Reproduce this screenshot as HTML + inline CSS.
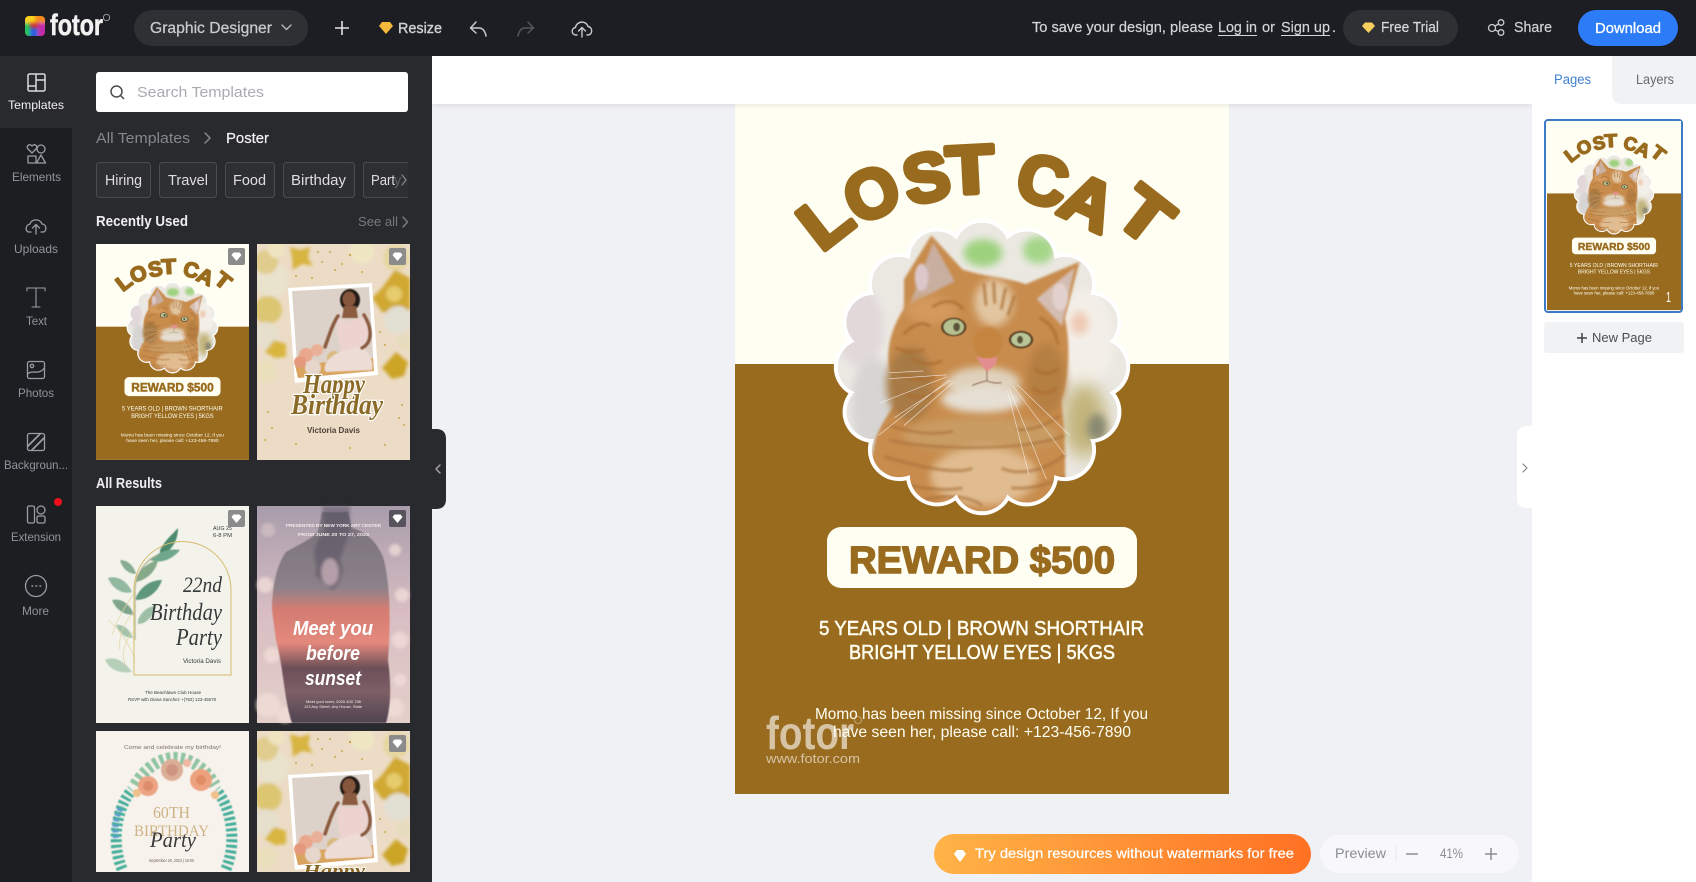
<!DOCTYPE html>
<html lang="en"><head><meta charset="utf-8"><title>Fotor Graphic Designer</title>
<style>
html,body{margin:0;padding:0;background:#f0f1f4;width:1696px;height:882px;overflow:hidden}
svg{display:block}
text{font-family:"Liberation Sans",sans-serif}
.sf{font-family:"Liberation Serif",serif;font-style:italic}
.ic{fill:none;stroke-linecap:round;stroke-linejoin:round}
</style></head><body>
<svg xmlns="http://www.w3.org/2000/svg" width="1696" height="882" viewBox="0 0 1696 882">
<defs>
<filter id="b1" x="-30%" y="-30%" width="160%" height="160%"><feGaussianBlur stdDeviation="1.500"/></filter>
<filter id="b3" x="-40%" y="-40%" width="180%" height="180%"><feGaussianBlur stdDeviation="4"/></filter>
<filter id="b8" x="-60%" y="-60%" width="220%" height="220%"><feGaussianBlur stdDeviation="9"/></filter>
<filter id="s" x="-20%" y="-20%" width="140%" height="140%"><feGaussianBlur stdDeviation=".6"/></filter>
<filter id="sh" x="-5%" y="-30%" width="110%" height="170%"><feGaussianBlur stdDeviation="3"/></filter>
<linearGradient id="org" x1="0" x2="1"><stop offset="0" stop-color="#ffb347"/><stop offset="1" stop-color="#ff7124"/></linearGradient>
<linearGradient id="sun" x1="0" y1="0" x2="0" y2="1"><stop offset="0" stop-color="#77707a"/><stop offset=".36" stop-color="#8d828a"/><stop offset=".46" stop-color="#d47c72"/><stop offset=".62" stop-color="#e4897c"/><stop offset=".74" stop-color="#6c5058"/><stop offset=".85" stop-color="#7d5f66"/><stop offset="1" stop-color="#4f4450"/></linearGradient>
<linearGradient id="bok" x1="0" y1="0" x2="0" y2="1"><stop offset="0" stop-color="#a89cab"/><stop offset=".5" stop-color="#d8bec3"/><stop offset="1" stop-color="#e4cfca"/></linearGradient>
<clipPath id="blobClip">
<circle r="110"/><circle cx="120" r="28"/><circle cx="111" cy="46" r="28"/><circle cx="85" cy="85" r="28"/><circle cx="46" cy="111" r="28"/><circle cy="120" r="28"/><circle cx="-46" cy="111" r="28"/><circle cx="-85" cy="85" r="28"/><circle cx="-111" cy="46" r="28"/><circle cx="-120" r="28"/><circle cx="-111" cy="-46" r="28"/><circle cx="-85" cy="-85" r="28"/><circle cx="-46" cy="-111" r="28"/><circle cy="-120" r="28"/><circle cx="46" cy="-111" r="28"/><circle cx="85" cy="-85" r="28"/><circle cx="111" cy="-46" r="28"/>
</clipPath>
<clipPath id="t2"><rect x="257" y="244" width="153" height="216"/></clipPath>
<g id="blobOut" fill="#fff">
<circle r="112"/><circle cx="120" r="32"/><circle cx="111" cy="46" r="32"/><circle cx="85" cy="85" r="32"/><circle cx="46" cy="111" r="32"/><circle cy="120" r="32"/><circle cx="-46" cy="111" r="32"/><circle cx="-85" cy="85" r="32"/><circle cx="-111" cy="46" r="32"/><circle cx="-120" r="32"/><circle cx="-111" cy="-46" r="32"/><circle cx="-85" cy="-85" r="32"/><circle cx="-46" cy="-111" r="32"/><circle cy="-120" r="32"/><circle cx="46" cy="-111" r="32"/><circle cx="85" cy="-85" r="32"/><circle cx="111" cy="-46" r="32"/>
</g>
<g id="cat">
<use href="#blobOut"/>
<g clip-path="url(#blobClip)">
<rect x="-150" y="-150" width="300" height="300" fill="#ebe8e2"/>
<ellipse cx="1" cy="-117" rx="20" ry="14" fill="#9ed27e" filter="url(#b3)"/>
<ellipse cx="58" cy="-120" rx="16" ry="14" fill="#a4d688" filter="url(#b3)"/>
<ellipse cx="-125" cy="-40" rx="24" ry="40" fill="#e2d8da" filter="url(#b3)"/>
<ellipse cx="-112" cy="40" rx="22" ry="50" fill="#d7d5d4" filter="url(#b3)"/>
<ellipse cx="105" cy="-30" rx="30" ry="50" fill="#f3efe8" filter="url(#b3)"/>
<ellipse cx="100" cy="-45" rx="9" ry="12" fill="#efc9b2" filter="url(#b3)"/>
<ellipse cx="105" cy="55" rx="22" ry="38" fill="#c2b47a" filter="url(#b8)"/>
<ellipse cx="118" cy="62" rx="10" ry="14" fill="#8a8a72" filter="url(#b3)"/>
<path d="M-52,-135L-20,-100C5,-92 25,-92 45,-85L100,-108L85,-50C92,-20 88,15 81,33C86,70 86,100 84,150L-125,150L-109,73C-100,50 -88,38 -82,28C-102,5 -100,-30 -80,-60L-80,-90Z" fill="#c88c4e" filter="url(#b1)"/>
<path d="M-50,-128L-74,-64L-28,-88Z" fill="#c9afa0" filter="url(#b1)"/>
<path d="M95,-102L56,-70L82,-42Z" fill="#d4bdb2" filter="url(#b1)"/>
<ellipse cx="-62" cy="-92" rx="7" ry="14" fill="#dcc8ca" filter="url(#b1)"/>
<ellipse cx="80" cy="-72" rx="8" ry="14" fill="#e3d1cd" filter="url(#b1)"/>
<ellipse cx="-74" cy="18" rx="24" ry="38" fill="#a87a44" filter="url(#b3)"/>
<ellipse cx="66" cy="12" rx="20" ry="36" fill="#b67f42" filter="url(#b3)"/>
<ellipse cx="-52" cy="-58" rx="26" ry="14" fill="#d39a5c" filter="url(#b3)"/>
<ellipse cx="12" cy="-66" rx="20" ry="24" fill="#e2c6a2" filter="url(#b3)"/>
<g stroke="#a96b2f" stroke-width="2.500" stroke-linecap="round" fill="none" filter="url(#b1)" opacity=".85">
<path d="M2,-85L4,-64M12,-86L13,-66M24,-80L20,-60M33,-72L27,-54"/>
<path d="M-50,-62C-38,-70 -26,-68 -20,-60M-80,-34C-68,-46 -60,-46 -54,-42M60,-50C70,-45 75,-38 78,-24M-72,-8C-60,-2 -50,-2 -42,-6M-82,8C-70,14 -58,14 -50,10M-78,28C-68,32 -58,32 -50,28M55,2C62,8 70,8 78,2M52,22C60,28 68,28 76,22M-88,-20C-78,-14 -68,-14 -60,-18"/>
</g>
<ellipse cx="6" cy="-25" rx="15" ry="16" fill="#c5853f" filter="url(#b1)"/>
<ellipse cx="1" cy="16" rx="38" ry="16" fill="#dfd1bb" filter="url(#b3)"/>
<ellipse cx="0" cy="33" rx="42" ry="14" fill="#e6dfd3" filter="url(#b3)"/>
<ellipse cx="-1" cy="70" rx="80" ry="18" fill="#c99c64" filter="url(#b3)"/>
<ellipse cx="2" cy="112" rx="55" ry="30" fill="#e0bc90" filter="url(#b3)"/>
<g stroke="#a9713a" stroke-width="2.500" fill="none" filter="url(#b1)" opacity=".8">
<path d="M-95,75C-50,86 50,86 85,70M-100,92C-60,104 -25,110 -10,104M20,104C40,112 65,106 85,90M-100,115C-70,124 -40,128 -20,124M30,124C50,126 70,120 85,112M-60,136C-30,130 -10,134 0,142M-95,60C-70,68 -50,70 -30,66M35,64C50,66 65,60 80,50"/>
</g>
<g filter="url(#s)">
<ellipse cx="-29" cy="-41" rx="13" ry="9.500" fill="#5e4224"/>
<ellipse cx="-29" cy="-41" rx="10.500" ry="8" fill="#b5c08e"/>
<ellipse cx="-26" cy="-41" rx="3.500" ry="4.500" fill="#5b5338"/>
<ellipse cx="40" cy="-28" rx="12.500" ry="9" fill="#5e4224"/>
<ellipse cx="40" cy="-28" rx="10" ry="7" fill="#bac698"/>
<ellipse cx="39" cy="-28" rx="3" ry="4" fill="#5b5338"/>
<path d="M-6,-11C0,-8 10,-8 16,-11L14,-3L5,5L0,-1Z" fill="#e38e8e"/>
<path d="M5,4L5,14M-10,19C-4,16 2,15 5,14C9,16 14,17 20,16" stroke="#8e6a56" stroke-width="1" fill="none"/>
</g>
<g stroke="#fff" stroke-width=".6" fill="none" opacity=".8">
<path d="M-36,8L-95,12M-36,10L-105,37M-34,13L-106,70M-30,16L-80,60M-60,4L-95,6M-32,14L-90,52"/>
<path d="M26,24L48,110M28,22L66,115M32,20L85,90M36,18L90,70"/>
</g>
</g>
</g>
<g id="balloons">
<g filter="url(#b1)">
<circle cx="272" cy="280" r="17" fill="#e9e2cc"/>
<circle cx="268" cy="310" r="14" fill="#dcc672"/>
<circle cx="266" cy="262" r="12" fill="#e0cc8c"/>
<path d="M290,247L300,250L310,247L308,258L313,266L302,264L293,270L292,258Z" fill="#d8b440"/>
<circle cx="276" cy="250" r="8" fill="#efe4c0"/>
<circle cx="362" cy="252" r="12" fill="#efe6c4"/>
<circle cx="396" cy="258" r="13" fill="#e6d6a0"/>
<path d="M395,270L410,278V310L398,315L382,312L372,298L382,288Z" fill="#d0a832"/>
<circle cx="394" cy="294" r="8" fill="#e6cc6c"/>
<circle cx="398" cy="320" r="14" fill="#e2dfd3"/>
<circle cx="266" cy="335" r="13" fill="#e5dfcc"/>
<path d="M274,340L286,344L286,357L275,358L265,352Z" fill="#d8b640"/>
<path d="M396,352L408,362L404,376L392,379L382,368Z" fill="#cca428"/>
<circle cx="266" cy="371" r="11" fill="#eadfbb"/>
<circle cx="405" cy="342" r="8" fill="#e6dcbd"/>
</g>
<g fill="#c9a94e">
<circle cx="322" cy="262" r="1"/><circle cx="335" cy="270" r="1"/><circle cx="350" cy="255" r="1.200"/><circle cx="312" cy="278" r="1"/><circle cx="362" cy="272" r="1"/><circle cx="380" cy="332" r="1"/><circle cx="385" cy="345" r="1"/><circle cx="330" cy="252" r="1"/><circle cx="342" cy="264" r="1"/><circle cx="318" cy="252" r="1"/><circle cx="296" cy="276" r="1"/>
</g>
<path d="M288,288L372,283L378,375L295,383Z" fill="#fff"/>
<path d="M292,291L369,287L374,371L298,378Z" fill="#ddd2c9"/>
<path d="M295,365L373,358L374,371L298,378Z" fill="#d9a45e"/>
<g filter="url(#s)">
<circle cx="306" cy="355" r="7" fill="#e9a88d"/><circle cx="300" cy="362" r="6" fill="#e4987c"/><circle cx="317" cy="350" r="6" fill="#eab097"/><circle cx="313" cy="368" r="8" fill="#e6d6cb"/>
<circle cx="334" cy="358" r="7" fill="#d9bb80"/>
<ellipse cx="350" cy="300" rx="10" ry="11" fill="#241a16"/>
<path d="M338,318C336,328 338,342 341,352L362,352C368,340 370,326 364,316C355,322 347,322 338,318Z" fill="#ecd3cf"/>
<ellipse cx="349" cy="299" rx="6.500" ry="7.500" fill="#86563c"/>
<path d="M344,306L356,306L358,318L342,318Z" fill="#8b5b40"/>
<path d="M340,352C326,358 322,368 326,372L372,370C374,360 368,350 360,346Z" fill="#eedcd6"/>
<path d="M338,316C332,325 329,336 325,347M364,315C372,328 373,342 362,348" stroke="#8b5b40" stroke-width="3.500" fill="none" stroke-linecap="round"/>
</g>
</g>
</defs>

<!-- canvas -->
<rect width="1696" height="882" fill="#f0f1f4"/>
<g transform="translate(735,97)">
<rect width="494" height="697" fill="#fffef2"/>
<rect y="267" width="494" height="430" fill="#996b1e"/>
<use href="#cat" transform="translate(247,270) scale(.975)"/>
<g fill="#996b1e" stroke="#996b1e" stroke-width="5" stroke-linejoin="round" stroke-linecap="round" font-weight="700" font-size="68" text-anchor="middle">
<text transform="translate(89,122) rotate(-38) scale(1.1,1)" y="25">L</text>
<text transform="translate(136,95) rotate(-25)" y="25">O</text>
<text transform="translate(191,79) rotate(-12)" y="25">S</text>
<text transform="translate(235,71) rotate(-3) scale(1.15,1)" y="25">T</text>
<text transform="translate(308,82) rotate(15)" y="25">C</text>
<text transform="translate(354,104) rotate(25) scale(1.05,1)" y="25">A</text>
<text transform="translate(411,117) rotate(38) scale(1.15,1)" y="25">T</text>
</g>
<rect x="92" y="430" width="310" height="61" rx="14" fill="#fffef2"/>
<text x="114" y="476" font-size="38" font-weight="700" fill="#996b1e" stroke="#996b1e" stroke-width="1.500" stroke-linejoin="round" textLength="266" lengthAdjust="spacingAndGlyphs">REWARD $500</text>
<g fill="#fffef2">
<text x="84" y="538" font-size="20" stroke="#fffef2" stroke-width=".5" textLength="325" lengthAdjust="spacingAndGlyphs">5 YEARS OLD | BROWN SHORTHAIR</text>
<text x="114" y="562" font-size="20" stroke="#fffef2" stroke-width=".5" textLength="266" lengthAdjust="spacingAndGlyphs">BRIGHT YELLOW EYES | 5KGS</text>
<text x="80" y="622" font-size="15.500" textLength="333" lengthAdjust="spacingAndGlyphs">Momo has been missing since October 12, If you</text>
<text x="98" y="640" font-size="15.500" textLength="298" lengthAdjust="spacingAndGlyphs">have seen her, please call: +123-456-7890</text>
</g>
</g>
<text x="766" y="749" font-size="46" font-weight="700" fill="#fff" fill-opacity=".6" textLength="88" lengthAdjust="spacingAndGlyphs">fotor</text>
<text x="766" y="763" font-size="13" fill="#fff" fill-opacity=".6" textLength="94" lengthAdjust="spacingAndGlyphs">www.fotor.com</text>
<circle cx="858" cy="720" r="3.500" fill="none" stroke="#fff" stroke-opacity=".5" stroke-width=".8"/>

<!-- white band -->
<rect x="432" y="58" width="1100" height="47" fill="#000" opacity=".1" filter="url(#sh)"/>
<rect x="432" y="56" width="1100" height="48" fill="#fff"/>

<!-- right panel -->
<rect x="1532" y="56" width="164" height="826" fill="#fff"/>
<path d="M1612,56H1696V104H1622Q1612,104 1612,94Z" fill="#f1f2f4"/>
<text x="1554" y="84" font-size="13.500" fill="#3f80d2" textLength="37" lengthAdjust="spacingAndGlyphs">Pages</text>
<text x="1636" y="84" font-size="13.500" fill="#666a70" textLength="38" lengthAdjust="spacingAndGlyphs">Layers</text>
<rect x="1545" y="120" width="137" height="192" rx="3" fill="#fff" stroke="#3a7cc6" stroke-width="2"/>
<g transform="translate(1547,121) scale(.2713)">
<rect width="494" height="697" fill="#fffef2"/>
<rect y="267" width="494" height="430" fill="#996b1e"/>
<use href="#cat" transform="translate(247,270) scale(.975)"/>
<g fill="#996b1e" stroke="#996b1e" stroke-width="5" stroke-linejoin="round" font-weight="700" font-size="68" text-anchor="middle">
<text transform="translate(89,122) rotate(-38) scale(1.1,1)" y="25">L</text>
<text transform="translate(136,95) rotate(-25)" y="25">O</text>
<text transform="translate(191,79) rotate(-12)" y="25">S</text>
<text transform="translate(235,71) rotate(-3) scale(1.15,1)" y="25">T</text>
<text transform="translate(308,82) rotate(15)" y="25">C</text>
<text transform="translate(354,104) rotate(25) scale(1.05,1)" y="25">A</text>
<text transform="translate(411,117) rotate(38) scale(1.15,1)" y="25">T</text>
</g>
<rect x="92" y="430" width="310" height="61" rx="14" fill="#fffef2"/>
<text x="114" y="476" font-size="38" font-weight="700" fill="#996b1e" stroke="#996b1e" stroke-width="1.500" textLength="266" lengthAdjust="spacingAndGlyphs">REWARD $500</text>
<g fill="#fffef2">
<text x="84" y="538" font-size="20" textLength="325" lengthAdjust="spacingAndGlyphs">5 YEARS OLD | BROWN SHORTHAIR</text>
<text x="114" y="562" font-size="20" textLength="266" lengthAdjust="spacingAndGlyphs">BRIGHT YELLOW EYES | 5KGS</text>
<text x="80" y="622" font-size="15.500" textLength="333" lengthAdjust="spacingAndGlyphs">Momo has been missing since October 12, If you</text>
<text x="98" y="640" font-size="15.500" textLength="298" lengthAdjust="spacingAndGlyphs">have seen her, please call: +123-456-7890</text>
</g>
</g>
<text x="1666" y="302" font-size="15" fill="#fff" textLength="5" lengthAdjust="spacingAndGlyphs">1</text>
<rect x="1544" y="322" width="140" height="31" rx="3" fill="#f1f2f4"/>
<path d="M1577,338H1587M1582,333V343" stroke="#3c3f44" stroke-width="1.500"/>
<text x="1592" y="342" font-size="13" fill="#4a4d52" textLength="60" lengthAdjust="spacingAndGlyphs">New Page</text>

<!-- right collapse -->
<path d="M1532,426H1527Q1517,426 1517,436V498Q1517,508 1527,508H1532Z" fill="#fff"/>
<path d="M1523,464L1527,468L1523,472" class="ic" stroke="#888" stroke-width="1.200"/>

<!-- bottom bar -->
<rect x="934" y="834" width="377" height="40" rx="20" fill="url(#org)"/>
<path d="M954,854L957,850H963L966,854L960,862Z" fill="#fff"/>
<text x="975" y="858" font-size="14" fill="#fff" stroke="#fff" stroke-width=".25" textLength="319" lengthAdjust="spacingAndGlyphs">Try design resources without watermarks for free</text>
<rect x="1320" y="835" width="199" height="38" rx="19" fill="#f8f8fa"/>
<text x="1335" y="858" font-size="14" fill="#8a8d94" textLength="51" lengthAdjust="spacingAndGlyphs">Preview</text>
<path d="M1396,846V862" stroke="#e8e9ec"/>
<path d="M1406,854H1418M1485,854H1497M1491,848V860" stroke="#8a8d94" stroke-width="1.500"/>
<text x="1440" y="858" font-size="13.500" fill="#8a8d94" textLength="23" lengthAdjust="spacingAndGlyphs">41%</text>

<!-- side panel -->
<rect x="72" y="56" width="360" height="826" fill="#292a2e"/>
<rect x="0" y="56" width="72" height="826" fill="#1c1e22"/>
<rect x="0" y="56" width="72" height="72" fill="#292a2e"/>
<path d="M432,429H436Q446,429 446,439V499Q446,509 436,509H432Z" fill="#292a2e"/>
<path d="M440,465L436,469L440,473" class="ic" stroke="#aaa" stroke-width="1.300"/>

<!-- rail -->
<g class="ic" stroke="#d9dadc" stroke-width="1.500">
<rect x="28" y="74" width="17" height="17" rx="1.500"/><path d="M36,74V91M36,80H45M28,86H36"/>
</g>
<g class="ic" stroke="#9a9da3" stroke-width="1.300">
<path d="M32,153L28,149C26,146 29,143 32,146C35,143 38,146 36,149Z"/><circle cx="41" cy="149" r="4"/><rect x="28" y="156" width="8" height="7"/><path d="M41,155L45.500,163H36.500Z"/>
<path d="M31,232H29C25,232 25,225 30,224C31,219 40,218 42,224C47,224 47,232 43,232H41M36,234V225M32.500,228L36,224.500L39.500,228"/>
<path d="M27,291V288H45V291M36,288V307M32,307H40" stroke-width="1.100"/>
<rect x="27.500" y="361.500" width="17" height="17" rx="2"/><circle cx="32" cy="366" r="1.700"/><path d="M27.500,374C33,369 38,376 44.500,368"/>
<rect x="27.500" y="433.500" width="17" height="17" rx="2"/><path d="M28,446L40,434M32,450L44,438" stroke-width="1.800"/>
<rect x="27.500" y="506" width="7" height="17" rx="1.500"/><circle cx="41" cy="510" r="4"/><rect x="37" y="516" width="8" height="7" rx="1.500"/>
<circle cx="36" cy="586" r="10.500"/>
</g>
<path d="M32,586h.6M36,586h.6M40,586h.6" stroke="#9a9da3" stroke-width="1.600" stroke-linecap="round"/>
<circle cx="58" cy="502" r="4" fill="#ef0f1a"/>
<g font-size="12">
<text x="8" y="109" fill="#f0f0f1" textLength="56" lengthAdjust="spacingAndGlyphs">Templates</text>
<g fill="#92959b">
<text x="12" y="181" textLength="49" lengthAdjust="spacingAndGlyphs">Elements</text>
<text x="14" y="253" textLength="44" lengthAdjust="spacingAndGlyphs">Uploads</text>
<text x="26" y="325" textLength="21" lengthAdjust="spacingAndGlyphs">Text</text>
<text x="18" y="397" textLength="36" lengthAdjust="spacingAndGlyphs">Photos</text>
<text x="4" y="469" textLength="64" lengthAdjust="spacingAndGlyphs">Backgroun...</text>
<text x="11" y="541" textLength="50" lengthAdjust="spacingAndGlyphs">Extension</text>
<text x="22" y="615" textLength="27" lengthAdjust="spacingAndGlyphs">More</text>
</g></g>

<!-- search / chips -->
<rect x="96" y="72" width="312" height="40" rx="3" fill="#fff"/>
<circle cx="116.500" cy="91.500" r="5.500" fill="none" stroke="#4a4c50" stroke-width="1.500"/><path d="M120.500,95.500L124,99" stroke="#4a4c50" stroke-width="1.500"/>
<text x="137" y="97" font-size="15" fill="#a9abb1" textLength="127" lengthAdjust="spacingAndGlyphs">Search Templates</text>
<text x="96" y="143" font-size="15" fill="#85878c" textLength="94" lengthAdjust="spacingAndGlyphs">All Templates</text>
<path d="M205,133L210,138L205,143" class="ic" stroke="#85878c" stroke-width="1.500"/>
<text x="226" y="143" font-size="15" fill="#f2f2f3" stroke="#f2f2f3" stroke-width=".2" textLength="43" lengthAdjust="spacingAndGlyphs">Poster</text>
<g fill="#2e2f33" stroke="#4b4c50">
<rect x="96.500" y="162.500" width="54" height="35" rx="3"/>
<rect x="159.500" y="162.500" width="57" height="35" rx="3"/>
<rect x="225.500" y="162.500" width="49" height="35" rx="3"/>
<rect x="283.500" y="162.500" width="71" height="35" rx="3"/>
<path d="M408,162.500H366.500Q363.500,162.500 363.500,165.500V194.500Q363.500,197.500 366.500,197.500H408"/>
</g>
<g font-size="14.500" fill="#dedee0">
<text x="105" y="185" textLength="37" lengthAdjust="spacingAndGlyphs">Hiring</text>
<text x="168" y="185" textLength="40" lengthAdjust="spacingAndGlyphs">Travel</text>
<text x="233" y="185" textLength="33" lengthAdjust="spacingAndGlyphs">Food</text>
<text x="291" y="185" textLength="55" lengthAdjust="spacingAndGlyphs">Birthday</text>
<text x="371" y="185" textLength="24" lengthAdjust="spacingAndGlyphs">Part</text>
<text x="394" y="185" fill="#5f6064">y</text>
</g>
<path d="M402,175L406,180L402,185" class="ic" stroke="#8a8b8f" stroke-width="1.200"/>
<text x="96" y="226" font-size="14.500" font-weight="700" fill="#efeff0" textLength="92" lengthAdjust="spacingAndGlyphs">Recently Used</text>
<text x="358" y="226" font-size="13" fill="#77797e" textLength="40" lengthAdjust="spacingAndGlyphs">See all</text>
<path d="M403,217L407.500,222L403,227" class="ic" stroke="#77797e" stroke-width="1.500"/>
<text x="96" y="488" font-size="14.500" font-weight="700" fill="#efeff0" textLength="66" lengthAdjust="spacingAndGlyphs">All Results</text>

<!-- thumb 1 -->
<g transform="translate(96,244) scale(.3097)">
<rect width="494" height="697" fill="#fffef2"/>
<rect y="267" width="494" height="430" fill="#996b1e"/>
<use href="#cat" transform="translate(247,270) scale(.975)"/>
<g fill="#996b1e" stroke="#996b1e" stroke-width="5" stroke-linejoin="round" font-weight="700" font-size="68" text-anchor="middle">
<text transform="translate(89,122) rotate(-38) scale(1.1,1)" y="25">L</text>
<text transform="translate(136,95) rotate(-25)" y="25">O</text>
<text transform="translate(191,79) rotate(-12)" y="25">S</text>
<text transform="translate(235,71) rotate(-3) scale(1.15,1)" y="25">T</text>
<text transform="translate(308,82) rotate(15)" y="25">C</text>
<text transform="translate(354,104) rotate(25) scale(1.05,1)" y="25">A</text>
<text transform="translate(411,117) rotate(38) scale(1.15,1)" y="25">T</text>
</g>
<rect x="92" y="430" width="310" height="61" rx="14" fill="#fffef2"/>
<text x="114" y="476" font-size="38" font-weight="700" fill="#996b1e" stroke="#996b1e" stroke-width="1.500" textLength="266" lengthAdjust="spacingAndGlyphs">REWARD $500</text>
<g fill="#fffef2">
<text x="84" y="538" font-size="20" textLength="325" lengthAdjust="spacingAndGlyphs">5 YEARS OLD | BROWN SHORTHAIR</text>
<text x="114" y="562" font-size="20" textLength="266" lengthAdjust="spacingAndGlyphs">BRIGHT YELLOW EYES | 5KGS</text>
<text x="80" y="622" font-size="15.500" textLength="333" lengthAdjust="spacingAndGlyphs">Momo has been missing since October 12, If you</text>
<text x="98" y="640" font-size="15.500" textLength="298" lengthAdjust="spacingAndGlyphs">have seen her, please call: +123-456-7890</text>
</g>
</g>

<!-- thumb 2 -->
<rect x="257" y="244" width="153" height="216" fill="#ecdcc6"/>
<g clip-path="url(#t2)">
<use href="#balloons"/>
<g fill="#c9a94e">
<circle cx="272" cy="428" r="1"/><circle cx="399" cy="418" r="1"/><circle cx="404" cy="425" r="1"/><circle cx="268" cy="412" r="1"/><circle cx="296" cy="444" r="1"/><circle cx="385" cy="445" r="1"/><circle cx="265" cy="440" r="1"/><circle cx="402" cy="405" r="1"/><circle cx="350" cy="448" r="1"/>
</g>
</g>
<text class="sf" x="303" y="393" font-size="27" font-weight="700" fill="#8a6a26" stroke="#fff" stroke-width="2.500" paint-order="stroke" textLength="62" lengthAdjust="spacingAndGlyphs">Happy</text>
<text class="sf" x="291" y="414" font-size="29" font-weight="700" fill="#8a6a26" stroke="#fff" stroke-width="2.500" paint-order="stroke" textLength="92" lengthAdjust="spacingAndGlyphs">Birthday</text>
<text x="307" y="433" font-size="8" font-weight="700" fill="#4e4237" textLength="53" lengthAdjust="spacingAndGlyphs">Victoria Davis</text>

<!-- thumb 3 -->
<rect x="96" y="506" width="153" height="217" fill="#f3f3ec"/>
<g fill="#86a98a" filter="url(#s)">
<path d="M160,550C165,540 172,535 178,528C178,540 172,552 160,555Z" fill="#4e8a6e"/>
<path d="M150,560C158,552 170,548 180,550C172,560 160,564 150,560Z" fill="#6fa88c"/>
<path d="M136,578C140,568 150,562 158,560C156,572 146,580 136,582Z"/>
<path d="M108,578C118,575 128,582 132,592C122,595 112,588 108,578Z" fill="#93b8a0"/>
<path d="M112,600C122,598 130,604 134,615C124,615 116,610 112,600Z" fill="#7ea58b"/>
<path d="M136,597C142,585 152,580 162,580C158,592 148,600 136,600Z" fill="#5f977b"/>
<path d="M120,560C128,560 134,566 136,574C128,574 122,568 120,560Z" fill="#88ad92"/>
<path d="M138,620C142,610 150,606 156,606C154,616 146,624 138,624Z" fill="#9dbfa6"/>
<path d="M116,625C124,624 130,630 133,638C125,638 119,633 116,625Z" fill="#a5c2aa"/>
<path d="M105,660C115,655 125,662 132,672C120,674 110,670 105,660Z" fill="#b5cfb8"/>
<path d="M135,640V590C135,575 145,560 158,555" fill="none" stroke="#a6a880" stroke-width="1"/>
</g>
<g fill="none" stroke="#e2d6a6" stroke-width=".7"><path d="M112,635C118,615 130,600 136,590M120,650C118,635 125,620 136,610M125,665C120,650 128,635 136,630M135,660C128,640 115,625 108,620"/></g>
<path d="M134,675V590A48.500,48.500 0 0 1 231,590V675Z" fill="none" stroke="#d6bb6a" stroke-width="1"/>
<g fill="#353a3a">
<text class="sf" x="183" y="592" font-size="22" textLength="39" lengthAdjust="spacingAndGlyphs">22nd</text>
<text class="sf" x="150" y="620" font-size="24" textLength="72" lengthAdjust="spacingAndGlyphs">Birthday</text>
<text class="sf" x="176" y="645" font-size="24" textLength="46" lengthAdjust="spacingAndGlyphs">Party</text>
<text x="183" y="663" font-size="6.500" textLength="38" lengthAdjust="spacingAndGlyphs">Victoria Davis</text>
<text x="145" y="694" font-size="4.500" textLength="56" lengthAdjust="spacingAndGlyphs">The Beachlawn Club House</text>
<text x="128" y="701" font-size="4.500" textLength="88" lengthAdjust="spacingAndGlyphs">RSVP with Diana Sanchez +(762) 123-45678</text>
<text x="213" y="530" font-size="5" textLength="19" lengthAdjust="spacingAndGlyphs">AUG 25</text>
<text x="213" y="537" font-size="5" textLength="19" lengthAdjust="spacingAndGlyphs">6-8 PM</text>
</g>

<!-- thumb 4 -->
<rect x="257" y="506" width="153" height="217" fill="url(#bok)"/>
<g fill="#f3dfd9" opacity=".75" filter="url(#b1)">
<circle cx="265" cy="585" r="8"/><circle cx="272" cy="655" r="8"/><circle cx="268" cy="705" r="12"/><circle cx="400" cy="640" r="8"/><circle cx="395" cy="550" r="6"/><circle cx="402" cy="595" r="7"/><circle cx="395" cy="708" r="9"/><circle cx="285" cy="715" r="8"/><circle cx="400" cy="680" r="6"/><circle cx="268" cy="530" r="7" opacity=".5"/>
</g>
<path d="M272,610C272,590 276,565 286,552C296,546 310,540 318,532L322,512H348L352,528C366,532 378,542 384,560C390,585 391,620 388,660C392,690 390,710 386,723H292C284,700 284,670 276,640Z" fill="url(#sun)" filter="url(#s)"/>
<path d="M322,506H350V530L340,560C346,570 340,585 332,590L315,575C320,560 305,555 325,530Z" fill="#50495a" opacity=".45" filter="url(#b1)"/>
<ellipse cx="330" cy="572" rx="9" ry="14" fill="#d3b7bf" opacity=".7" filter="url(#b1)"/>
<g fill="#fff" class="sf" font-weight="700">
<text x="293" y="635" font-size="20" textLength="80" lengthAdjust="spacingAndGlyphs">Meet you</text>
<text x="306" y="660" font-size="20" textLength="54" lengthAdjust="spacingAndGlyphs">before</text>
<text x="305" y="685" font-size="20" textLength="56" lengthAdjust="spacingAndGlyphs">sunset</text>
</g>
<g fill="#f3ecec">
<text x="286" y="527" font-size="4.800" font-weight="700" textLength="95" lengthAdjust="spacingAndGlyphs">PRESENTED BY NEW YORK ART CENTER</text>
<text x="298" y="536" font-size="4.800" font-weight="700" textLength="71" lengthAdjust="spacingAndGlyphs">FROM JUNE 20 TO 27, 2023</text>
<text x="306" y="703" font-size="4" textLength="55" lengthAdjust="spacingAndGlyphs">Meet your lover, 2020 400 786</text>
<text x="304" y="708" font-size="4" textLength="58" lengthAdjust="spacingAndGlyphs">123 Any Street, Any House, State</text>
</g>

<!-- thumb 5 -->
<rect x="96" y="731" width="153" height="141" fill="#f8f2ec"/>
<text x="124" y="749" font-size="5" fill="#7d7168" textLength="97" lengthAdjust="spacingAndGlyphs">Come and celebrate my birthday!</text>
<g filter="url(#s)">
<path d="M122,869C110,840 118,805 132,790" fill="none" stroke="#44ae9a" stroke-width="11" stroke-dasharray="3 2.500"/>
<path d="M226,869C238,840 230,805 216,790" fill="none" stroke="#44ae9a" stroke-width="11" stroke-dasharray="3 2.500"/>
<path d="M116,838C114,822 118,812 122,806" fill="none" stroke="#5b9dcc" stroke-width="6" stroke-dasharray="2.500 3"/>
<path d="M135,785C145,768 160,758 175,758C190,758 205,768 215,785" fill="none" stroke="#8fc4a2" stroke-width="12" stroke-dasharray="4 3"/>
<circle cx="172" cy="770" r="11" fill="#dcae98"/><circle cx="172" cy="770" r="6" fill="#cd9580"/>
<circle cx="148" cy="786" r="10" fill="#eba384"/><circle cx="148" cy="786" r="5" fill="#de8d6c"/>
<circle cx="201" cy="780" r="11" fill="#eda27f"/><circle cx="201" cy="780" r="5" fill="#e28c63"/>
<circle cx="137" cy="793" r="4" fill="#efc08a"/><circle cx="215" cy="795" r="4" fill="#efc08a"/><circle cx="187" cy="763" r="4" fill="#efb6a2"/>
</g>
<text x="153" y="818" font-size="17" fill="#cdb285" textLength="37" lengthAdjust="spacingAndGlyphs" style="font-family:'Liberation Serif',serif">60TH</text>
<text x="134" y="836" font-size="16" fill="#cdb285" textLength="75" lengthAdjust="spacingAndGlyphs" style="font-family:'Liberation Serif',serif">BIRTHDAY</text>
<text class="sf" x="150" y="847" font-size="22" fill="#3a3a3a" textLength="46" lengthAdjust="spacingAndGlyphs">Party</text>
<text x="149" y="862" font-size="4.500" fill="#6b5e50" textLength="45" lengthAdjust="spacingAndGlyphs">September 20, 2023 | 19:00</text>

<!-- thumb 6 -->
<rect x="257" y="731" width="153" height="141" fill="#ecdcc6"/>
<svg x="257" y="731" width="153" height="141" viewBox="257 731 153 141">
<use href="#balloons" y="487"/>
<text class="sf" x="303" y="876" font-size="17" font-weight="700" fill="#8a6a26" stroke="#fff" stroke-width="1.500" paint-order="stroke" textLength="62" lengthAdjust="spacingAndGlyphs">Happy</text>
</svg>

<!-- badges -->
<g>
<rect x="228" y="248" width="17" height="17" rx="2" fill="#8b8b8b"/><path d="M231.500,255L233.500,252.500H239.500L241.500,255L236.500,261Z" fill="#fff"/>
<rect x="389" y="248" width="17" height="17" rx="2" fill="#8b8b8b"/><path d="M392.500,255L394.500,252.500H400.500L402.500,255L397.500,261Z" fill="#fff"/>
<rect x="228" y="510" width="17" height="17" rx="2" fill="#8b8b8b"/><path d="M231.500,517L233.500,514.500H239.500L241.500,517L236.500,523Z" fill="#fff"/>
<rect x="389" y="510" width="17" height="17" rx="2" fill="#57535c"/><path d="M392.500,517L394.500,514.500H400.500L402.500,517L397.500,523Z" fill="#fff"/>
<rect x="389" y="735" width="17" height="17" rx="2" fill="#8b8b8b"/><path d="M392.500,742L394.500,739.500H400.500L402.500,742L397.500,748Z" fill="#fff"/>
</g>

<!-- header -->
<rect width="1696" height="56" fill="#1c1e23"/>
<clipPath id="lg"><rect x="25" y="16" width="20" height="20" rx="4"/></clipPath>
<g clip-path="url(#lg)">
<rect x="25" y="16" width="20" height="20" fill="#c33"/>
<g filter="url(#b1)">
<rect x="22" y="13" width="13" height="10" fill="#f7d21f"/>
<rect x="35" y="13" width="13" height="10" fill="#f48a1c"/>
<rect x="22" y="23" width="8" height="16" fill="#27c25c"/>
<rect x="30" y="28" width="8" height="11" fill="#2a5fe0"/>
<rect x="38" y="23" width="10" height="16" fill="#c02aa8"/>
</g>
</g>
<text x="50" y="35" font-size="30" font-weight="700" fill="#f2f2f2" stroke="#f2f2f2" stroke-width=".6" textLength="53" lengthAdjust="spacingAndGlyphs">fotor</text>
<circle cx="106.500" cy="17.500" r="3.200" fill="none" stroke="#ccc" stroke-width=".7"/>
<rect x="134" y="10" width="174" height="36" rx="18" fill="#2e3034"/>
<text x="150" y="33" font-size="15.500" fill="#c9cacc" stroke="#c9cacc" stroke-width=".25" textLength="122" lengthAdjust="spacingAndGlyphs">Graphic Designer</text>
<path d="M282,25L286.500,29.500L291,25" class="ic" stroke="#bbb" stroke-width="1.300"/>
<path d="M342,21V35M335,28H349" stroke="#e4e4e5" stroke-width="1.600"/>
<path d="M379,26L382,22H390L393,26L386,34Z" fill="#f2b93b"/>
<text x="398" y="33" font-size="15" fill="#cfd0d2" stroke="#cfd0d2" stroke-width=".4" textLength="44" lengthAdjust="spacingAndGlyphs">Resize</text>
<path d="M476,22L470.500,28L476,33M471,28H479C483,28 485,31 486,36" class="ic" stroke="#c9cacc" stroke-width="1.500"/>
<path d="M528,22L533.500,28L528,33M533,28H525C521,28 519,31 518,36" class="ic" stroke="#55575b" stroke-width="1.500"/>
<path d="M577,35H576C571,35 571,28 575.500,27.500C576.500,21 586,20 588,26.500C593,27 593,35 587.500,35H587M582,37V28M578.500,31L582,27.500L585.500,31" class="ic" stroke="#c9cacc" stroke-width="1.400"/>
<g font-size="14.500" fill="#d3d4d6" stroke="#d3d4d6" stroke-width=".2">
<text x="1032" y="32" textLength="181" lengthAdjust="spacingAndGlyphs">To save your design, please</text>
<text x="1218" y="32" textLength="39" lengthAdjust="spacingAndGlyphs">Log in</text>
<text x="1262" y="32" textLength="13" lengthAdjust="spacingAndGlyphs">or</text>
<text x="1281" y="32" textLength="49" lengthAdjust="spacingAndGlyphs">Sign up</text>
<text x="1332" y="32">.</text>
</g>
<path d="M1218,35.500H1257M1281,35.500H1330" stroke="#d3d4d6"/>
<rect x="1343" y="10" width="115" height="36" rx="18" fill="#2e3034"/>
<path d="M1362,26L1365,22.500H1372L1375,26L1368.500,33Z" fill="#f8cf5c"/>
<text x="1381" y="32" font-size="14.500" fill="#d6d7d9" stroke="#d6d7d9" stroke-width=".2" textLength="58" lengthAdjust="spacingAndGlyphs">Free Trial</text>
<g class="ic" stroke="#c9cacc" stroke-width="1.300"><circle cx="1492" cy="28" r="3.500"/><circle cx="1501" cy="22.500" r="2.800"/><circle cx="1501" cy="32.500" r="2.800"/><path d="M1495,26L1498.500,24M1495,30L1498.500,31.500"/></g>
<text x="1514" y="32" font-size="14.500" fill="#cfd0d2" stroke="#cfd0d2" stroke-width=".2" textLength="38" lengthAdjust="spacingAndGlyphs">Share</text>
<rect x="1578" y="10" width="100" height="36" rx="18" fill="#2b7cf6"/>
<text x="1595" y="33" font-size="14.500" fill="#fff" stroke="#fff" stroke-width=".3" textLength="66" lengthAdjust="spacingAndGlyphs">Download</text>
</svg>
</body></html>
